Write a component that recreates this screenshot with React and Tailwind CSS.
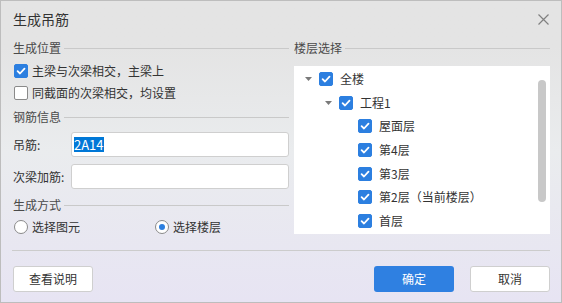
import { useState } from 'react';

const font = "font-['Microsoft_YaHei','Noto_Sans_CJK_SC',sans-serif]";

function Check({ checked, onClick }) {
  return (
    <span
      onClick={onClick}
      className={
        'flex h-[14px] w-[14px] shrink-0 items-center justify-center rounded-[2px] border ' +
        (checked ? 'border-[#2c7fe0] bg-[#2c7fe0]' : 'border-[#8a8a8a] bg-white')
      }
    >
      {checked && (
        <svg width="10" height="10" viewBox="0 0 10 10" fill="none">
          <path d="M1.6 5.2 L4 7.5 L8.5 2.6" stroke="white" strokeWidth="1.8" strokeLinecap="round" strokeLinejoin="round" />
        </svg>
      )}
    </span>
  );
}

function Radio({ checked }) {
  return (
    <span className="flex h-[14px] w-[14px] shrink-0 items-center justify-center rounded-full border border-[#8a8a8a] bg-white">
      {checked && <span className="h-[6px] w-[6px] rounded-full bg-[#2c7fe0]" />}
    </span>
  );
}

function SectionTitle({ children }) {
  return (
    <div className="flex h-[20px] items-center">
      <span className="text-[12px] text-[#4a4a4a]">{children}</span>
      <span className="ml-[3px] h-px flex-1 bg-[#c9c9c9]" />
    </div>
  );
}

function Caret() {
  return (
    <svg width="7" height="4" viewBox="0 0 7 4" className="shrink-0">
      <path d="M0 0 L7 0 L3.5 4 Z" fill="#7a7a7a" />
    </svg>
  );
}

const floors = ['屋面层', '第4层', '第3层', '第2层（当前楼层）', '首层'];

export default function App() {
  const [pos, setPos] = useState([true, false]);

  return (
    <div className={`${font} flex h-[303px] w-[562px] flex-col border border-[#bdbdbd] bg-gradient-to-b from-[#e4e4e4] from-15% via-[#eaecee] to-[#e7e4f3] px-[11px] text-[#333]`}>
      {/* Title */}
      <div className="flex h-[37px] shrink-0 items-center justify-between">
        <span className="pl-[1px] text-[14px] text-[#333]">生成吊筋</span>
        <svg width="11" height="11" viewBox="0 0 11 11" className="mr-[1px]">
          <path d="M0.5 0.5 L10.5 10.5 M10.5 0.5 L0.5 10.5" stroke="#808080" strokeWidth="1.2" />
        </svg>
      </div>

      <div className="flex h-[212px] shrink-0">
        {/* Left column */}
        <div className="flex w-[277px] flex-col pl-[1px]">
          <SectionTitle>生成位置</SectionTitle>
          <div className="mt-[2px] flex h-[22px] items-center gap-[4px] pl-[1px] text-[12px]">
            <Check checked={pos[0]} onClick={() => setPos([!pos[0], pos[1]])} />
            <span>主梁与次梁相交，主梁上</span>
          </div>
          <div className="flex h-[22px] items-center gap-[4px] pl-[1px] text-[12px]">
            <Check checked={pos[1]} onClick={() => setPos([pos[0], !pos[1]])} />
            <span>同截面的次梁相交，均设置</span>
          </div>

          <div className="mt-[3px]">
            <SectionTitle>钢筋信息</SectionTitle>
          </div>
          <div className="mt-[5px] flex items-center">
            <span className="w-[58px] text-[12px]">吊筋:</span>
            <div className="flex h-[25px] flex-1 items-center rounded-[3px] border border-[#cfcfcf] bg-white pl-[2px]">
              <span className="bg-[#0078d7] text-[13px] leading-[15px] text-white">2A14</span>
            </div>
          </div>
          <div className="mt-[7px] flex items-center">
            <span className="w-[58px] text-[12px]">次梁加筋:</span>
            <div className="h-[25px] flex-1 rounded-[3px] border border-[#cfcfcf] bg-white" />
          </div>

          <div className="mt-[6px]">
            <SectionTitle>生成方式</SectionTitle>
          </div>
          <div className="mt-[1px] flex h-[22px] items-center text-[12px]">
            <div className="flex w-[142px] items-center gap-[4px] pl-[1px]">
              <Radio checked={false} />
              <span>选择图元</span>
            </div>
            <div className="flex items-center gap-[4px]">
              <Radio checked />
              <span>选择楼层</span>
            </div>
          </div>
        </div>

        {/* Right column */}
        <div className="ml-[5px] flex w-[256px] flex-col">
          <div className="flex h-[20px] items-center">
            <span className="text-[12px] text-[#4a4a4a]">楼层选择</span>
            <span className="ml-[3px] h-px flex-1 bg-[#c9c9c9]" />
          </div>
          <div className="mt-[8px] flex h-[168px] bg-white">
            <div className="flex-1 pt-[1px] text-[12px] text-[#333]">
              <div className="flex h-[23.7px] items-center pl-[11px]">
                <Caret />
                <span className="ml-[7px]"><Check checked /></span>
                <span className="ml-[7px]">全楼</span>
              </div>
              <div className="flex h-[23.7px] items-center pl-[31px]">
                <Caret />
                <span className="ml-[7px]"><Check checked /></span>
                <span className="ml-[7px]">工程1</span>
              </div>
              {floors.map(f => (
                <div key={f} className="flex h-[23.7px] items-center pl-[64px]">
                  <Check checked />
                  <span className="ml-[7px]">{f}</span>
                </div>
              ))}
            </div>
            <div className="w-[12px] pt-[14px]">
              <div className="h-[122px] w-[8px] rounded-full bg-[#c8c8c8]" />
            </div>
          </div>
        </div>
      </div>

      <div className="h-px shrink-0 bg-[#cccccc]" />

      {/* Buttons */}
      <div className="flex items-center pt-[15px] text-[12px]">
        <button className="ml-[1px] h-[26px] w-[80px] rounded-[3px] border border-[#cfcfcf] bg-white text-[#333]">
          查看说明
        </button>
        <div className="flex-1" />
        <button className="h-[26px] w-[80px] rounded-[3px] bg-[#2f80e1] text-white">
          确定
        </button>
        <button className="ml-[16px] h-[26px] w-[80px] rounded-[3px] border border-[#cfcfcf] bg-white text-[#333]">
          取消
        </button>
      </div>
    </div>
  );
}
